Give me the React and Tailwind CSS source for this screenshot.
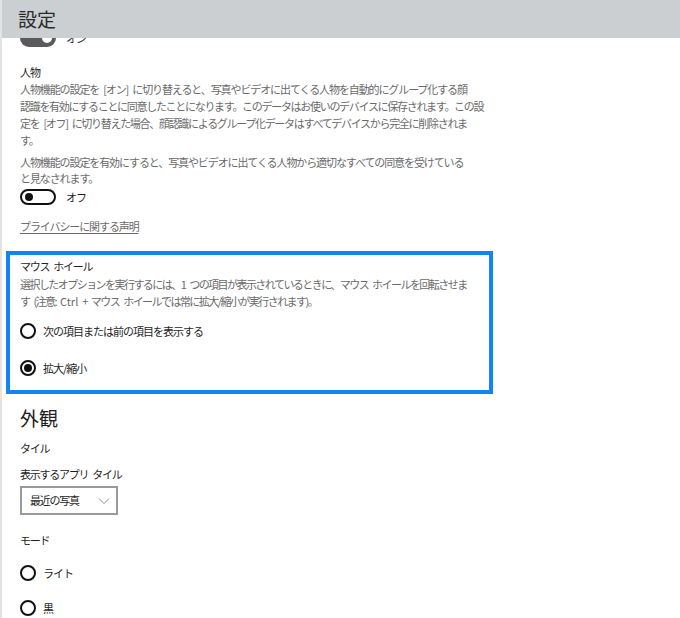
import React from "react";

const FONT = { fontFamily: '"Noto Sans CJK JP", "Noto Sans", sans-serif' };

function Sp() {
  return <span className="inline-block w-[4px]" />;
}

function Radio({ checked, label, className = "" }) {
  return (
    <div className={`flex items-center h-[16px] ${className}`}>
      <div className="w-[16px] h-[16px] rounded-full border-2 border-[#111] flex items-center justify-center shrink-0">
        {checked && <div className="w-[8px] h-[8px] rounded-full bg-[#111]" />}
      </div>
      <span className="ml-[7px] text-[11px] leading-[17px] tracking-[-1px] text-[#1e1e1e]">{label}</span>
    </div>
  );
}

function Line({ children, className = "" }) {
  return <div className={`whitespace-nowrap ${className}`}>{children}</div>;
}

export default function App() {
  return (
    <div className="relative w-[680px] h-[618px] overflow-hidden bg-white border-l-2 border-[#e4e4e4]" style={FONT}>
      {/* sticky header over content */}
      <div className="absolute top-0 left-0 right-0 h-[38px] bg-[#cbcfd1] z-10 flex items-center pl-[16px]">
        <span className="text-[19px] leading-[28px] text-[#2a2a2a]">設定</span>
      </div>

      <div className="pl-[4px] pt-[29px]">
        <div className="pl-[14px] text-[11px] leading-[17px] tracking-[-1.1px]">
          {/* cut-off toggle (on) */}
          <div className="flex items-center h-[18px]">
            <div className="w-[36px] h-[18px] rounded-full bg-[#5a5a5a] flex items-center justify-end pr-[4px]">
              <div className="w-[10px] h-[10px] rounded-full bg-white" />
            </div>
            <span className="ml-[10px] text-[#1e1e1e]">オン</span>
          </div>

          <div className="mt-[17px] text-[#1e1e1e]">人物</div>
          <div className="text-[#6a6a6a]">
            <Line>人物機能の設定を<Sp />[オン]<Sp />に切り替えると、写真やビデオに出てくる人物を自動的にグループ化する顔</Line>
            <Line className="tracking-[-1.3px]">認識を有効にすることに同意したことになります。このデータはお使いのデバイスに保存されます。この設</Line>
            <Line className="tracking-[-1.3px]">定を<Sp />[オフ]<Sp />に切り替えた場合、顔認識によるグループ化データはすべてデバイスから完全に削除されま</Line>
            <Line>す。</Line>
          </div>
          <div className="mt-[5px] text-[#6a6a6a] leading-[16px]">
            <Line>人物機能の設定を有効にすると、写真やビデオに出てくる人物から適切なすべての同意を受けている</Line>
            <Line>と見なされます。</Line>
          </div>

          {/* toggle off */}
          <div className="mt-[3px] flex items-center h-[16px]">
            <div className="w-[36px] h-[16px] rounded-full border-2 border-[#111] flex items-center pl-[3px]">
              <div className="w-[8px] h-[8px] rounded-full bg-[#111]" />
            </div>
            <span className="ml-[10px] text-[#1e1e1e]">オフ</span>
          </div>

          <div className="mt-[13px] text-[#6a6a6a] underline underline-offset-2">プライバシーに関する声明</div>
        </div>

        {/* highlighted box */}
        <div className="mt-[16px] w-[487px] border-4 border-[#0f86f3] pl-[10px] pt-[2px] pb-[14px] text-[11px] leading-[17px] tracking-[-1.25px]">
          <div className="text-[#1e1e1e] leading-[19px]">マウス<Sp />ホイール</div>
          <div className="text-[#6a6a6a] tracking-[-1.55px]">
            <Line>選択したオプションを実行するには、1<Sp />つの項目が表示されているときに、マウス<Sp />ホイールを回転させま</Line>
            <Line>す<Sp />(注意:<Sp /><span className="tracking-[0px]">Ctrl</span><Sp />+<Sp />マウス<Sp />ホイールでは常に拡大/縮小が実行されます)。</Line>
          </div>
          <Radio className="mt-[13px]" label="次の項目または前の項目を表示する" />
          <Radio className="mt-[21px]" checked label="拡大/縮小" />
        </div>

        <div className="pl-[14px] text-[11px] leading-[17px] tracking-[-1.25px]">
          <div className="mt-[10px] text-[19px] leading-[28px] tracking-[0px] text-[#1e1e1e]">外観</div>
          <div className="mt-[8px] text-[#1e1e1e]">タイル</div>
          <div className="mt-[9px] text-[#1e1e1e]">表示するアプリ<Sp />タイル</div>
          <div className="mt-[3px] w-[98px] h-[29px] border-2 border-[#9a9a9a] flex items-center justify-between pl-[8px] pr-[6px] text-[#1e1e1e]">
            <span>最近の写真</span>
            <svg width="12" height="8" viewBox="0 0 12 8" fill="none">
              <path d="M1 1.5 L6 6.5 L11 1.5" stroke="#8a8a8a" strokeWidth="1" />
            </svg>
          </div>
          <div className="mt-[17px] text-[#1e1e1e]">モード</div>
          <Radio className="mt-[16px]" label="ライト" />
          <Radio className="mt-[19px]" label="黒" />
        </div>
      </div>
    </div>
  );
}
